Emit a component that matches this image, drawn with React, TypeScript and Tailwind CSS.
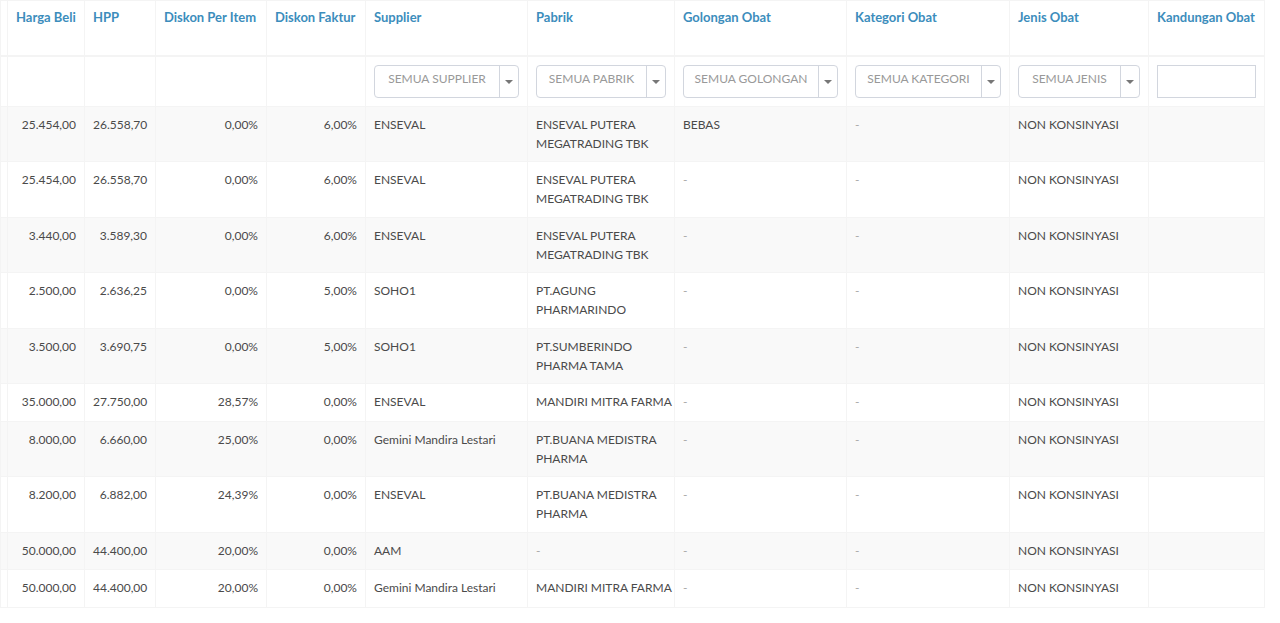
const rows = [
  { harga: "25.454,00", hpp: "26.558,70", dItem: "0,00%", dFaktur: "6,00%", supplier: "ENSEVAL", pabrik: ["ENSEVAL PUTERA", "MEGATRADING TBK"], golongan: "BEBAS" },
  { harga: "25.454,00", hpp: "26.558,70", dItem: "0,00%", dFaktur: "6,00%", supplier: "ENSEVAL", pabrik: ["ENSEVAL PUTERA", "MEGATRADING TBK"], golongan: "-" },
  { harga: "3.440,00", hpp: "3.589,30", dItem: "0,00%", dFaktur: "6,00%", supplier: "ENSEVAL", pabrik: ["ENSEVAL PUTERA", "MEGATRADING TBK"], golongan: "-" },
  { harga: "2.500,00", hpp: "2.636,25", dItem: "0,00%", dFaktur: "5,00%", supplier: "SOHO1", pabrik: ["PT.AGUNG", "PHARMARINDO"], golongan: "-" },
  { harga: "3.500,00", hpp: "3.690,75", dItem: "0,00%", dFaktur: "5,00%", supplier: "SOHO1", pabrik: ["PT.SUMBERINDO", "PHARMA TAMA"], golongan: "-" },
  { harga: "35.000,00", hpp: "27.750,00", dItem: "28,57%", dFaktur: "0,00%", supplier: "ENSEVAL", pabrik: ["MANDIRI MITRA FARMA"], golongan: "-" },
  { harga: "8.000,00", hpp: "6.660,00", dItem: "25,00%", dFaktur: "0,00%", supplier: "Gemini Mandira Lestari", pabrik: ["PT.BUANA MEDISTRA", "PHARMA"], golongan: "-" },
  { harga: "8.200,00", hpp: "6.882,00", dItem: "24,39%", dFaktur: "0,00%", supplier: "ENSEVAL", pabrik: ["PT.BUANA MEDISTRA", "PHARMA"], golongan: "-" },
  { harga: "50.000,00", hpp: "44.400,00", dItem: "20,00%", dFaktur: "0,00%", supplier: "AAM", pabrik: ["-"], golongan: "-" },
  { harga: "50.000,00", hpp: "44.400,00", dItem: "20,00%", dFaktur: "0,00%", supplier: "Gemini Mandira Lestari", pabrik: ["MANDIRI MITRA FARMA"], golongan: "-" },
];

const headers = [
  { label: "", w: "w-[7px]" },
  { label: "Harga Beli", w: "w-[77px]" },
  { label: "HPP", w: "w-[71px]" },
  { label: "Diskon Per Item", w: "w-[111px]" },
  { label: "Diskon Faktur", w: "w-[99px]" },
  { label: "Supplier", w: "w-[162px]" },
  { label: "Pabrik", w: "w-[147px]" },
  { label: "Golongan Obat", w: "w-[172px]" },
  { label: "Kategori Obat", w: "w-[163px]" },
  { label: "Jenis Obat", w: "w-[139px]" },
  { label: "Kandungan Obat", w: "w-[116px]" },
];

const cell = "border border-[#f4f4f4] px-2 py-2 align-top leading-[19.25px] whitespace-nowrap";

const Dash = ({ v }: { v: string }) =>
  v === "-" ? <span className="text-[#a8a8a8]">-</span> : <>{v}</>;

const FilterSelect = ({ text }: { text: string }) => (
  <div className="flex h-[33px] w-full rounded-[4px] border border-[#d2d6de] bg-white">
    <div className="flex-1 truncate pt-[3px] text-center text-[12px] leading-5 uppercase text-[#999]">{text}</div>
    <div className="flex w-[19px] items-center justify-center border-l border-[#d2d6de]">
      <span className="mt-[2px] block h-0 w-0 border-x-[4px] border-t-[4px] border-x-transparent border-t-[#777]" />
    </div>
  </div>
);

export default function App() {
  return (
    <div className="h-[623px] w-[1280px] overflow-hidden bg-white font-['Lato','Liberation_Sans',sans-serif] text-[12px] text-[#4a4a4a]">
      <table className="w-[1265px] table-fixed border-collapse">
        <colgroup>
          {headers.map((h, i) => (
            <col key={i} className={h.w} />
          ))}
        </colgroup>
        <thead>
          <tr className="h-[55px]">
            {headers.map((h, i) => (
              <th
                key={i}
                className="overflow-hidden whitespace-nowrap border border-b-2 border-[#f4f4f4] px-2 pt-[6px] pb-2 text-left align-top text-[13px] font-bold leading-5 text-[#3c8dbc]"
              >
                {h.label}
              </th>
            ))}
          </tr>
          <tr className="h-[50px]">
            <td className={cell}></td>
            <td className={cell}></td>
            <td className={cell}></td>
            <td className={cell}></td>
            <td className={cell}></td>
            <td className={cell}><FilterSelect text="Semua Supplier" /></td>
            <td className={cell}><FilterSelect text="Semua Pabrik" /></td>
            <td className={cell}><FilterSelect text="Semua Golongan" /></td>
            <td className={cell}><FilterSelect text="Semua Kategori" /></td>
            <td className={cell}><FilterSelect text="Semua Jenis" /></td>
            <td className={cell}>
              <div className="h-[33px] w-full border border-[#d2d6de] bg-white" />
            </td>
          </tr>
        </thead>
        <tbody>
          {rows.map((r, i) => (
            <tr key={i} className={`h-[37.5px] ${i % 2 === 0 ? "bg-[#f9f9f9]" : "bg-white"}`}>
              <td className={cell}></td>
              <td className={`${cell} text-right`}>{r.harga}</td>
              <td className={`${cell} text-right`}>{r.hpp}</td>
              <td className={`${cell} text-right`}>{r.dItem}</td>
              <td className={`${cell} text-right`}>{r.dFaktur}</td>
              <td className={cell}>{r.supplier}</td>
              <td className={cell}>
                {r.pabrik.map((line, j) => (
                  <div key={j}>
                    <Dash v={line} />
                  </div>
                ))}
              </td>
              <td className={cell}><Dash v={r.golongan} /></td>
              <td className={cell}><Dash v="-" /></td>
              <td className={cell}>NON KONSINYASI</td>
              <td className={cell}></td>
            </tr>
          ))}
        </tbody>
      </table>
    </div>
  );
}
